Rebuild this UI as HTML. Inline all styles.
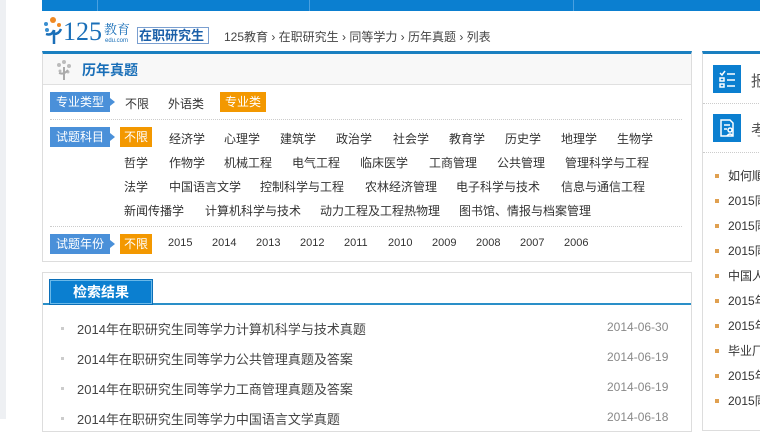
<!DOCTYPE html>
<html><head><meta charset="utf-8"><style>
*{margin:0;padding:0;box-sizing:border-box}
body{width:760px;height:419px;overflow:hidden;background:#fff;position:relative;font-family:"Liberation Sans","Noto Sans CJK SC",sans-serif;font-size:12px;color:#333}
.a{position:absolute;white-space:nowrap}
.lab{position:absolute;background:#4a90d9;color:#fff;height:20px;line-height:20px;padding:0 6px;font-size:12px;white-space:nowrap}
.lab:after{content:"";position:absolute;right:-5px;top:6px;border-left:5px solid #4a90d9;border-top:4px solid transparent;border-bottom:4px solid transparent}
.sel{position:absolute;background:#f39800;color:#fff;height:20px;line-height:20px;padding:0 4px;white-space:nowrap}
.dot{position:absolute;left:50px;width:632px;border-top:1px dotted #ccc}
.li{position:absolute;left:77px;font-size:13px;color:#444;white-space:nowrap}
.li:before{content:"";position:absolute;left:-16px;top:8px;width:3px;height:3px;background:#ccc}
.dt{position:absolute;left:607px;font-size:12px;color:#888;white-space:nowrap}
.r{position:absolute;left:728px;font-size:12px;color:#333;white-space:nowrap}
.r:before{content:"";position:absolute;left:-13px;top:7px;width:4px;height:4px;background:#e0a050}
</style></head><body>
<div class="a" style="left:0;top:0;width:6px;height:419px;background:#eef0f3"></div>
<div class="a" style="left:42px;top:0;width:718px;height:11px;background:#0b7fd0"></div>
<div class="a" style="left:97px;top:0;width:1px;height:11px;background:#4aa0e0"></div>
<div class="a" style="left:309px;top:0;width:1px;height:11px;background:#4aa0e0"></div>
<div class="a" style="left:573px;top:0;width:1px;height:11px;background:#4aa0e0"></div>
<svg class="a" style="left:42px;top:16px" width="25" height="30"><circle cx="11" cy="4" r="3" fill="#f08a24"/><circle cx="4" cy="8" r="2" fill="#3a8fd0"/><circle cx="17" cy="9" r="2" fill="#f08a24"/><circle cx="5" cy="14" r="2" fill="#3a8fd0"/><path d="M4 18 Q10 20 12 14 M12 14 L12 28 M12 18 Q17 18 19 13" stroke="#1a6fb8" stroke-width="2.5" fill="none"/></svg>
<div class="a" style="left:63px;top:18px;font-family:'Liberation Serif',serif;font-size:26px;color:#1a6fb8;line-height:28px">125</div>
<div class="a" style="left:104px;top:19px;font-family:'Liberation Serif','Noto Serif CJK SC',serif;font-size:13px;color:#1a6fb8">教育</div>
<div class="a" style="left:105px;top:38px;font-size:6px;color:#1a6fb8">edu.com</div>
<div class="a" style="left:137px;top:27px;width:72px;height:17px;border:1px solid #7a9fd0;color:#1a5fa8;font-size:13px;line-height:15px;padding-left:1px;font-weight:bold">在职研究生</div>
<div class="a" style="left:224px;top:28px;font-size:12px;color:#444">125教育 › 在职研究生 › 同等学力 › 历年真题 › 列表</div>
<div class="a" style="left:42px;top:51px;width:650px;height:211px;border:1px solid #ddd;border-top:3px solid #1a7fc0"></div>
<div class="a" style="left:43px;top:54px;width:648px;height:31px;background:#f8f8f8;border-bottom:1px solid #e0e0e0"></div>
<svg class="a" style="left:54px;top:58px" width="20" height="24"><g fill="#bbb"><circle cx="10" cy="4" r="2"/><circle cx="5" cy="7" r="2"/><circle cx="15" cy="8" r="2"/><circle cx="6" cy="13" r="1.5"/><circle cx="14" cy="14" r="1.5"/></g><path d="M10 9 L10 22 M5 15 Q10 17 14 12" stroke="#aaa" stroke-width="2" fill="none"/></svg>
<div class="a" style="left:82px;top:60px;font-size:14px;font-weight:bold;color:#1a6fb8">历年真题</div>
<div class="lab" style="left:50px;top:92px">专业类型</div>
<div class="a" style="left:125px;top:95px">不限</div>
<div class="a" style="left:168px;top:95px">外语类</div>
<div class="sel" style="left:220px;top:92px;padding:0 5px">专业类</div>
<div class="dot" style="top:119px"></div>
<div class="lab" style="left:50px;top:127px">试题科目</div>
<div class="sel" style="left:120px;top:127px">不限</div>
<div class="a" style="left:169px;top:130px">经济学</div><div class="a" style="left:224px;top:130px">心理学</div><div class="a" style="left:280px;top:130px">建筑学</div><div class="a" style="left:336px;top:130px">政治学</div><div class="a" style="left:393px;top:130px">社会学</div><div class="a" style="left:449px;top:130px">教育学</div><div class="a" style="left:505px;top:130px">历史学</div><div class="a" style="left:561px;top:130px">地理学</div><div class="a" style="left:617px;top:130px">生物学</div>
<div class="a" style="left:124px;top:154px">哲学</div><div class="a" style="left:169px;top:154px">作物学</div><div class="a" style="left:224px;top:154px">机械工程</div><div class="a" style="left:292px;top:154px">电气工程</div><div class="a" style="left:360px;top:154px">临床医学</div><div class="a" style="left:429px;top:154px">工商管理</div><div class="a" style="left:497px;top:154px">公共管理</div><div class="a" style="left:565px;top:154px">管理科学与工程</div>
<div class="a" style="left:124px;top:178px">法学</div><div class="a" style="left:169px;top:178px">中国语言文学</div><div class="a" style="left:260px;top:178px">控制科学与工程</div><div class="a" style="left:365px;top:178px">农林经济管理</div><div class="a" style="left:456px;top:178px">电子科学与技术</div><div class="a" style="left:561px;top:178px">信息与通信工程</div>
<div class="a" style="left:124px;top:202px">新闻传播学</div><div class="a" style="left:205px;top:202px">计算机科学与技术</div><div class="a" style="left:320px;top:202px">动力工程及工程热物理</div><div class="a" style="left:459px;top:202px">图书馆、情报与档案管理</div>
<div class="dot" style="top:226px"></div>
<div class="lab" style="left:50px;top:234px">试题年份</div>
<div class="sel" style="left:120px;top:234px">不限</div>
<div class="a" style="left:168px;top:237px;font-size:11px">2015</div><div class="a" style="left:212px;top:237px;font-size:11px">2014</div><div class="a" style="left:256px;top:237px;font-size:11px">2013</div><div class="a" style="left:300px;top:237px;font-size:11px">2012</div><div class="a" style="left:344px;top:237px;font-size:11px">2011</div><div class="a" style="left:388px;top:237px;font-size:11px">2010</div><div class="a" style="left:432px;top:237px;font-size:11px">2009</div><div class="a" style="left:476px;top:237px;font-size:11px">2008</div><div class="a" style="left:520px;top:237px;font-size:11px">2007</div><div class="a" style="left:564px;top:237px;font-size:11px">2006</div>
<div class="a" style="left:42px;top:272px;width:650px;height:160px;border:1px solid #ddd"></div>
<div class="a" style="left:43px;top:303px;width:648px;height:2px;background:#2a8fc8"></div>
<div class="a" style="left:49px;top:279px;width:104px;height:26px;background:#0b7fd0;border:1px solid #0b6fb8;box-shadow:inset 0 0 0 1px #6ab8e8;color:#fff;font-size:14px;font-weight:bold;text-align:center;line-height:25px">检索结果</div>
<div class="li" style="top:319px">2014年在职研究生同等学力计算机科学与技术真题</div><div class="dt" style="top:320px">2014-06-30</div>
<div class="li" style="top:349px">2014年在职研究生同等学力公共管理真题及答案</div><div class="dt" style="top:350px">2014-06-19</div>
<div class="li" style="top:379px">2014年在职研究生同等学力工商管理真题及答案</div><div class="dt" style="top:380px">2014-06-19</div>
<div class="li" style="top:409px">2014年在职研究生同等学力中国语言文学真题</div><div class="dt" style="top:410px">2014-06-18</div>
<div class="a" style="left:702px;top:51px;width:60px;height:380px;border:1px solid #ddd;border-top:3px solid #1a7fc0"></div>
<div class="a" style="left:713px;top:65px;width:28px;height:28px;background:#0b7fd0"></div>
<svg class="a" style="left:713px;top:65px" width="28" height="28"><g stroke="#fff" stroke-width="1.5" fill="none"><path d="M7 8 l2 2 l3-4"/><rect x="7" y="13" width="4" height="3"/><rect x="7" y="19" width="4" height="3"/><path d="M14 9h8M14 15h8M14 21h8"/></g></svg>
<div class="a" style="left:751px;top:70px;font-size:15px;color:#555">报</div>
<div class="a" style="left:703px;top:103px;width:58px;border-top:1px dotted #ccc"></div>
<div class="a" style="left:713px;top:114px;width:28px;height:28px;background:#0b7fd0"></div>
<svg class="a" style="left:713px;top:114px" width="28" height="28"><g stroke="#fff" stroke-width="1.5" fill="none"><path d="M8 6h9l3 3v13H8z"/><path d="M11 11h6M11 15h3"/><circle cx="17" cy="16" r="2"/><path d="M14 22q3-4 6 0"/></g></svg>
<div class="a" style="left:751px;top:119px;font-size:15px;color:#555">考</div>
<div class="a" style="left:703px;top:152px;width:58px;border-top:1px dotted #ccc"></div>
<div class="r" style="top:167px">如何順</div><div class="r" style="top:192px">2015同</div><div class="r" style="top:217px">2015同</div><div class="r" style="top:242px">2015同</div><div class="r" style="top:267px">中国人</div><div class="r" style="top:292px">2015年</div><div class="r" style="top:317px">2015年</div><div class="r" style="top:342px">毕业厂</div><div class="r" style="top:367px">2015年</div><div class="r" style="top:392px">2015同</div>
</body></html>
